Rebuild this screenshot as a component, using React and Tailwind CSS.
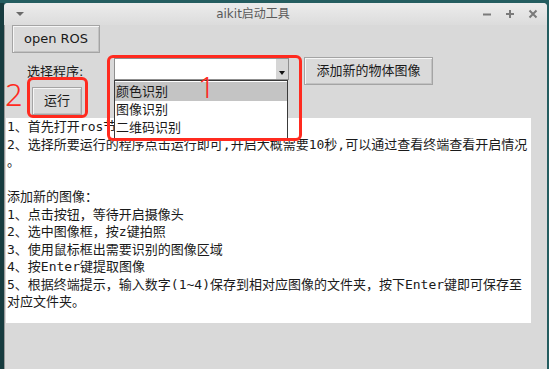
import React from "react";

const mono = { fontFamily: '"DejaVu Sans Mono", "Noto Sans CJK SC", monospace' };
const sans = { fontFamily: '"DejaVu Sans", "Noto Sans CJK SC", sans-serif' };

function TkButton({ className = "", children }) {
  return (
    <div
      className={
        "flex items-center justify-center border border-[#a4a4a4] bg-[#dadada] text-[13px] text-[#1a1a1a] shadow-[inset_1px_1px_0_#f6f6f6,inset_-1px_-1px_0_#c2c2c2] " +
        className
      }
      style={sans}
    >
      {children}
    </div>
  );
}

const lines = [
  "1、首先打开ros节点，再运行程序",
  "2、选择所要运行的程序点击运行即可,开启大概需要10秒,可以通过查看终端查看开启情况",
  "。",
  "\u00a0",
  "添加新的图像：",
  "1、点击按钮，等待开启摄像头",
  "2、选中图像框，按z键拍照",
  "3、使用鼠标框出需要识别的图像区域",
  "4、按Enter键提取图像",
  "5、根据终端提示，输入数字(1~4)保存到相对应图像的文件夹，按下Enter键即可保存至",
  "对应文件夹。",
];

export default function App() {
  return (
    <div className="relative h-[369px] w-[549px] overflow-hidden bg-[#245d60]">
      <div className="absolute left-0 top-[3px] h-[366px] w-[4px] bg-[#173c3f]" />
      <div className="ml-[4px] mt-[3px] flex h-[366px] w-[543px] flex-col overflow-hidden rounded-t-[4px] bg-[#d9d9d9]">
        {/* title bar */}
        <div className="flex h-[22px] shrink-0 items-center bg-gradient-to-b from-[#ececec] to-[#dcdcdc] text-[#666]">
          <div className="flex w-[30px] justify-center pl-[2px]">
            <div className="h-0 w-0 border-l-[4px] border-r-[4px] border-t-[4px] border-l-transparent border-r-transparent border-t-[#6a6a6a]" />
          </div>
          <div className="flex-1 text-center text-[12px] text-[#5a5a5a]" style={sans}>
            aikit启动工具
          </div>
          <div className="flex w-[75px] items-center gap-[13px] pl-[10px] text-[#7a7a7a]">
            <svg width="10" height="10" viewBox="0 0 10 10">
              <path d="M1 5.5H9" stroke="#7a7a7a" strokeWidth="2" />
            </svg>
            <svg width="10" height="10" viewBox="0 0 10 10">
              <path d="M1 5H9M5 1V9" stroke="#7a7a7a" strokeWidth="2" />
            </svg>
            <svg width="10" height="10" viewBox="0 0 10 10">
              <path d="M1.5 1.5L8.5 8.5M8.5 1.5L1.5 8.5" stroke="#7a7a7a" strokeWidth="2" />
            </svg>
          </div>
        </div>

        {/* body */}
        <div className="flex flex-1 flex-col border-l border-[#9a9a9a]">
          <TkButton className="ml-[7px] h-[28px] w-[88px]">open ROS</TkButton>

          <div className="mt-[4px] flex items-start">
            <div className="ml-[22px] mt-[5px] w-[87px] text-[13px] text-[#1a1a1a]" style={sans}>
              选择程序:
            </div>
            <div className="mt-[1px] flex h-[22px] w-[175px] border border-[#8f8f8f] bg-white">
              <div className="flex-1" />
              <div className="flex w-[12px] items-end justify-center bg-[#d6d6d6] pb-[4px]">
                <div className="h-0 w-0 border-l-[3.5px] border-r-[3.5px] border-t-[4px] border-l-transparent border-r-transparent border-t-[#111]" />
              </div>
            </div>
            <TkButton className="ml-[15px] h-[28px] w-[129px]">添加新的物体图像</TkButton>
          </div>

          <TkButton className="ml-[27px] mt-[2px] h-[28px] w-[50px]">运行</TkButton>

          <div
            className="ml-[1px] mt-[3px] h-[205px] w-[525px] bg-white pl-[1px] text-[13px] leading-[17.5px] text-[#1a1a1a]"
            style={mono}
          >
            {lines.map((l, i) => (
              <div key={i} className="whitespace-nowrap">
                {l}
              </div>
            ))}
          </div>
        </div>
      </div>

      {/* dropdown list overlay */}
      <div className="absolute left-[114px] top-[80px] flex h-[59px] w-[174px] flex-col border border-[#3a3a3a] bg-white pt-[1px] text-[13px] text-[#1a1a1a]" style={sans}>
        <div className="flex h-[19px] items-center bg-[#c4c4c4] pl-[1px]">颜色识别</div>
        <div className="flex h-[18px] items-center pl-[1px]">图像识别</div>
        <div className="flex h-[18px] items-center pl-[1px]">二维码识别</div>
      </div>

      {/* annotations */}
      <div className="absolute left-[107px] top-[55px] h-[86px] w-[195px] rounded-[6px] border-[3px] border-[#ff2a1f]" />
      <div className="absolute left-[198px] top-[70px] text-[30px] leading-[34px] text-[#ff2a1f]" style={{ fontFamily: '"Noto Sans", sans-serif', fontWeight: 300 }}>
        1
      </div>
      <div className="absolute left-[27px] top-[77px] h-[41px] w-[61px] rounded-[6px] border-[3px] border-[#ff2a1f]" />
      <div className="absolute left-[5px] top-[76px] text-[31px] leading-[36px] text-[#ff2a1f]" style={{ fontFamily: '"Noto Sans", sans-serif', fontWeight: 300 }}>
        2
      </div>
    </div>
  );
}
